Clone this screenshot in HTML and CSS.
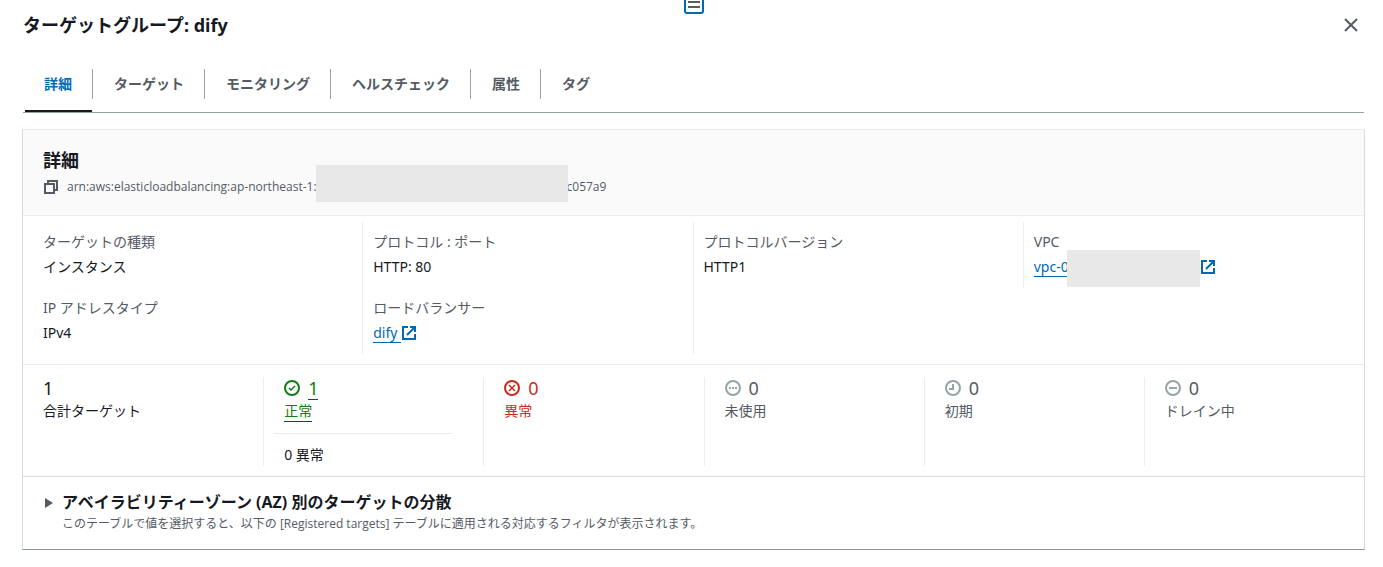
FILE: index.html
```html
<!doctype html>
<html lang="ja">
<head>
  <title>ターゲットグループ: dify</title>
  <meta charset="utf-8">
  <link rel="stylesheet" href="styles.css">
</head>
<body>
  <div class="panel">
    <button class="handle" type="button" aria-label="サイズ変更"><span></span><span></span></button>
    <header class="panel-head">
      <h1>ターゲットグループ: dify</h1>
      <button class="close" type="button" aria-label="閉じる">
        <svg width="16" height="16" viewBox="0 0 16 16"><path d="M2 2l12 12M14 2L2 14"/></svg>
      </button>
    </header>

    <div class="tabs" role="tablist">
      <button type="button" role="tab" class="tab active" aria-selected="true">詳細</button>
      <button type="button" role="tab" class="tab">ターゲット</button>
      <button type="button" role="tab" class="tab">モニタリング</button>
      <button type="button" role="tab" class="tab">ヘルスチェック</button>
      <button type="button" role="tab" class="tab">属性</button>
      <button type="button" role="tab" class="tab">タグ</button>
    </div>

    <section class="card">
      <div class="card-head">
        <h2>詳細</h2>
        <div class="arn">
          <button class="copy" type="button" aria-label="コピー">
            <svg width="16" height="16" viewBox="0 0 16 16"><path d="M2 5h9v9H2zM5 5V2h9v9h-3"/></svg>
          </button>
          <span>arn:aws:elasticloadbalancing:ap-northeast-1:</span><span class="mask mask-arn"></span><span>c057a9</span>
        </div>
      </div>

      <div class="info">
        <dl class="info-col">
          <div class="item"><dt>ターゲットの種類</dt><dd>インスタンス</dd></div>
          <div class="item"><dt>IP アドレスタイプ</dt><dd>IPv4</dd></div>
        </dl>
        <dl class="info-col">
          <div class="item"><dt>プロトコル : ポート</dt><dd>HTTP: 80</dd></div>
          <div class="item">
            <dt>ロードバランサー</dt>
            <dd><a href="#">dify&nbsp;</a><svg class="ext" width="16" height="16" viewBox="0 0 16 16"><path d="M7 2H2v12h12V9M9 2h5v5M14 2L6 10"/></svg></dd>
          </div>
        </dl>
        <dl class="info-col">
          <div class="item"><dt>プロトコルバージョン</dt><dd>HTTP1</dd></div>
        </dl>
        <dl class="info-col">
          <div class="item">
            <dt>VPC</dt>
            <dd><a href="#">vpc-0</a><span class="mask mask-vpc"></span><svg class="ext" width="16" height="16" viewBox="0 0 16 16"><path d="M7 2H2v12h12V9M9 2h5v5M14 2L6 10"/></svg></dd>
          </div>
        </dl>
      </div>

      <div class="stats">
        <div class="stat">
          <div class="num">1</div>
          <div class="name">合計ターゲット</div>
        </div>
        <div class="stat healthy">
          <div class="num">
            <svg width="16" height="16" viewBox="0 0 16 16"><circle cx="8" cy="8" r="7"/><path class="thin" d="M5 8l2 2 4-4"/></svg>
            <a href="#">1</a>
          </div>
          <div class="name"><a href="#">正常</a></div>
          <div class="sub">0 異常</div>
        </div>
        <div class="stat unhealthy">
          <div class="num">
            <svg width="16" height="16" viewBox="0 0 16 16"><circle cx="8" cy="8" r="7"/><path class="thin" d="M5 5l6 6M11 5l-6 6"/></svg>
            <span>0</span>
          </div>
          <div class="name">異常</div>
        </div>
        <div class="stat muted">
          <div class="num">
            <svg width="16" height="16" viewBox="0 0 16 16"><circle cx="8" cy="8" r="7"/><path d="M4 8h2M7 8h2M10 8h2"/></svg>
            <span>0</span>
          </div>
          <div class="name">未使用</div>
        </div>
        <div class="stat muted">
          <div class="num">
            <svg width="16" height="16" viewBox="0 0 16 16"><circle cx="8" cy="8" r="7"/><path d="M8 4v5H4"/></svg>
            <span>0</span>
          </div>
          <div class="name">初期</div>
        </div>
        <div class="stat muted">
          <div class="num">
            <svg width="16" height="16" viewBox="0 0 16 16"><circle cx="8" cy="8" r="7"/><path d="M4 8h8"/></svg>
            <span>0</span>
          </div>
          <div class="name">ドレイン中</div>
        </div>
      </div>

      <div class="zones">
        <button class="toggle" type="button" aria-expanded="false" aria-label="展開">
          <svg width="8" height="10" viewBox="0 0 8 10"><path d="M0 0l8 5-8 5z"/></svg>
        </button>
        <div>
          <h3>アベイラビリティーゾーン (AZ) 別のターゲットの分散</h3>
          <p>このテーブルで値を選択すると、以下の [Registered targets] テーブルに適用される対応するフィルタが表示されます。</p>
        </div>
      </div>
    </section>
  </div>
</body>
</html>
```
FILE: styles.css
```css
* {
  box-sizing: border-box;
}
body {
  margin: 0;
  background: #fff;
  color: #16191f;
  font-family: "Noto Sans", "Noto Sans CJK JP", sans-serif;
  font-size: 14px;
  line-height: 22px;
}
h1, h2, h3, p, dl, dd {
  margin: 0;
}
button {
  margin: 0;
  padding: 0;
  border: 0;
  background: none;
  font: inherit;
  color: inherit;
  cursor: pointer;
}
svg {
  display: block;
  flex: none;
  fill: none;
  stroke: currentColor;
  stroke-width: 2;
}
a {
  color: #006bb3;
  text-decoration: none;
  border-bottom: 1px solid #006bb3;
}
.panel {
  position: relative;
  padding: 0 18px 16px 22px;
}

/* drag handle hanging over the top edge */
.handle {
  position: absolute;
  top: -6px;
  left: 50%;
  width: 20px;
  height: 20px;
  margin-left: -8px;
  padding: 0 2px;
  border: 2px solid #006bb3;
  border-radius: 3px;
  background: #fff;
}
.handle span {
  display: block;
  height: 2px;
  margin: 3px 0;
  background: #545b64;
}
.panel-head {
  display: flex;
  justify-content: space-between;
  align-items: center;
  height: 50px;
  padding: 0 6px 0 1px;
}
h1 {
  font-size: 18px;
}
.close {
  color: #545b64;
}

/* tabs */
.tabs {
  display: flex;
  align-items: center;
  height: 63px;
  margin: 0 1px;
  padding: 6px 0 1px;
  border-bottom: 1px solid #95a5a6;
}
.tab {
  position: relative;
  height: 30px;
  margin-left: 1px;
  padding: 0 20px;
  border-right: 1px solid #95a5a6;
  color: #545b64;
  font-weight: bold;
}
.tab:last-child {
  border-right: 0;
}
.tab.active {
  color: #006bb3;
}
.tab.active::after {
  content: "";
  position: absolute;
  left: 1px;
  right: 0;
  bottom: -13px;
  height: 2px;
  background: #16191f;
}

/* card */
.card {
  margin-top: 16px;
  border: 1px solid #d5dbdb;
  border-top-color: #eaeded;
  border-bottom-color: #879596;
}
.card-head {
  height: 86px;
  padding: 18px 20px 0;
  border-bottom: 1px solid #eaeded;
  background: #fafafa;
}
h2 {
  font-size: 18px;
  line-height: 24px;
}
.arn {
  display: flex;
  align-items: center;
  height: 30px;
  color: #545b64;
  font-family: "Open Sans", "Noto Sans CJK JP", sans-serif;
  font-size: 12px;
  font-weight: 500;
}
.copy {
  margin-right: 8px;
}
.mask {
  position: relative;
  flex: none;
  height: 37px;
  background: #e8e8e8;
}
.mask-arn {
  width: 252px;
  margin: -8px -1px 0 -1px;
}
.mask-vpc {
  width: 133px;
  margin: -6px 0 -8px -2px;
}
.info {
  display: grid;
  grid-template-columns: repeat(4, 1fr);
  padding: 6px 11px 10px 9px;
  border-bottom: 1px solid #eaeded;
}
.info-col {
  padding-left: 10px;
}
.info-col:first-child {
  padding-left: 11px;
}
.info-col + .info-col {
  border-left: 1px solid #eaeded;
}
.info-col:last-child {
  align-self: start;
}
.item {
  padding: 9px 0 10px;
}
.item dt {
  margin-bottom: 3px;
  color: #545b64;
}
.item dd {
  display: flex;
  align-items: center;
  height: 22px;
}
.item a {
  line-height: 18px;
}
.ext {
  color: #006bb3;
}

/* target counts */
.stats {
  display: grid;
  grid-template-columns: repeat(6, 1fr);
  padding: 12px 0 10px 20px;
  border-bottom: 1px solid #d5dbdb;
}
.stat + .stat {
  padding-left: 20px;
  border-left: 1px solid #eaeded;
}
.num {
  display: flex;
  align-items: center;
  gap: 8px;
  height: 22px;
  margin-bottom: 1px;
  font-size: 18px;
}
.thin {
  stroke-width: 1.5;
}
.name a {
  display: inline-block;
  line-height: 20px;
}
.healthy {
  color: #117d14;
}
.healthy a {
  color: inherit;
  border-color: #16425f;
}
.sub {
  margin: 11px 30px 0 -10px;
  padding: 10px 10px 0;
  border-top: 1px solid #eaeded;
  color: #16191f;
}
.unhealthy {
  color: #d5281b;
}
.muted {
  color: #545b64;
}
.muted svg {
  color: #95a5a6;
}

/* availability zones */
.zones {
  display: flex;
  padding: 13px 22px 15px;
}
.toggle {
  display: flex;
  width: 17px;
  height: 26px;
  align-items: center;
  color: #545b64;
}
.toggle svg {
  fill: currentColor;
  stroke: none;
}
h3 {
  font-size: 16px;
  line-height: 24px;
}
.zones p {
  color: #545b64;
  font-family: "Open Sans", "Noto Sans CJK JP", sans-serif;
  font-size: 12px;
  line-height: 20px;
}
```
